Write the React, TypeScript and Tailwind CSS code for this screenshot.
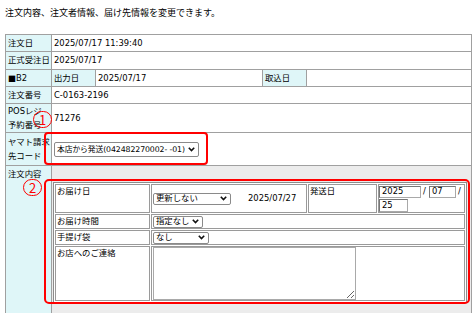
import React from "react";

function Chevron() {
  return (
    <svg width="7" height="5" viewBox="0 0 7 5" className="shrink-0">
      <path d="M0.8 0.8 L3.5 3.6 L6.2 0.8" fill="none" stroke="#111" strokeWidth="1.6" />
    </svg>
  );
}

function Sel({ label, className }: { label: string; className: string }) {
  return (
    <div
      className={
        "flex items-center justify-between overflow-hidden rounded-[2px] border border-[#8a8a8a] bg-white pl-[2px] pr-[3px] " +
        className
      }
    >
      <span className="whitespace-nowrap">{label}</span>
      <Chevron />
    </div>
  );
}

function Inp({ value, className }: { value: string; className: string }) {
  return (
    <div
      className={
        "flex items-center border border-[#a9a9a9] border-t-[#777] border-l-[#777] bg-white pl-[2px] " +
        className
      }
    >
      {value}
    </div>
  );
}

export default function App() {
  const lab = "whitespace-nowrap border border-[#a0a0a0] bg-[#dff6f8] pl-[2px] pr-0 align-middle";
  const val = "whitespace-nowrap border border-[#a0a0a0] bg-white px-[2px] align-middle";
  const icell = "whitespace-nowrap border border-[#9a9a9a] p-0";
  return (
    <div className="relative min-h-[313px] w-[472px] overflow-hidden bg-white text-black font-['DejaVu_Sans','Noto_Sans_CJK_JP',sans-serif]">
      <p className="pl-[5px] pt-[7px] text-[9px] leading-[12px] font-['Noto_Sans_CJK_JP',sans-serif]">
        注文内容、注文者情報、届け先情報を変更できます。
      </p>
      <table className="ml-[5px] mt-[15px] w-[466px] table-fixed border-collapse border border-[#a0a0a0] text-[8.4px] leading-[13px]">
        <colgroup>
          <col className="w-[46px]" />
          <col className="w-[44px]" />
          <col className="w-[167px]" />
          <col className="w-[44px]" />
          <col className="w-[165px]" />
        </colgroup>
        <tbody>
          <tr>
            <td className={lab + " h-[17px]"}>注文日</td>
            <td className={val} colSpan={4}>2025/07/17 11:39:40</td>
          </tr>
          <tr>
            <td className={lab + " h-[18px]"}>正式受注日</td>
            <td className={val} colSpan={4}>2025/07/17</td>
          </tr>
          <tr>
            <td className={lab + " h-[17px]"}>■B2</td>
            <td className={lab}>出力日</td>
            <td className={val}>2025/07/17</td>
            <td className={lab}>取込日</td>
            <td className={val}></td>
          </tr>
          <tr>
            <td className={lab + " h-[17px]"}>注文番号</td>
            <td className={val} colSpan={4}>C-0163-2196</td>
          </tr>
          <tr>
            <td className={lab + " h-[29px] leading-[14px]"}>
              POSレジ
              <br />
              予約番号
            </td>
            <td className={val} colSpan={4}>71276</td>
          </tr>
          <tr>
            <td className={lab + " h-[33px] leading-[14px]"}>
              ヤマト請求
              <br />
              先コード
            </td>
            <td className={val} colSpan={4}>
              <Sel label="本店から発送(042482270002- -01)" className="h-[15px] w-[145px] text-[7.8px] tracking-[-0.1px]" />
            </td>
          </tr>
          <tr>
            <td className="whitespace-nowrap border border-[#a0a0a0] bg-[#dff6f8] pl-[2px] pt-[2px] align-top">注文内容</td>
            <td className="border border-[#a0a0a0] bg-[#ececec] pb-[20px] pl-[1px] pt-[16px] align-top" colSpan={4}>
              <table className="w-[414px] table-fixed border-separate border-spacing-[1px] border border-[#8c8c8c] bg-white">
                <colgroup>
                  <col className="w-[95px]" />
                  <col className="w-[156px]" />
                  <col className="w-[69px]" />
                  <col className="w-[87px]" />
                </colgroup>
                <tbody>
                  <tr>
                    <td className={icell + " h-[28px] px-[1px] align-top"}>お届け日</td>
                    <td className={icell + " px-[1px] align-middle"}>
                      <div className="flex items-center">
                        <Sel label="更新しない" className="h-[12px] w-[78px]" />
                        <span className="ml-[17px]">2025/07/27</span>
                      </div>
                    </td>
                    <td className={icell + " px-[1px] align-top"}>発送日</td>
                    <td className={icell + " align-top"}>
                      <div className="flex items-center">
                        <Inp value="2025" className="h-[12px] w-[42px]" />
                        <span className="ml-[2px] w-[5px]">/</span>
                        <Inp value="07" className="ml-[1px] h-[12px] w-[27px]" />
                        <span className="ml-[2px]">/</span>
                      </div>
                      <Inp value="25" className="mt-[1px] h-[13px] w-[29px]" />
                    </td>
                  </tr>
                  <tr>
                    <td className={icell + " h-[15px] px-[1px] align-top"}>お届け時間</td>
                    <td className={icell + " px-[1px] align-middle"} colSpan={3}>
                      <Sel label="指定なし" className="h-[12px] w-[50px]" />
                    </td>
                  </tr>
                  <tr>
                    <td className={icell + " h-[15px] px-[1px] align-top"}>手提げ袋</td>
                    <td className={icell + " px-[1px] align-middle"} colSpan={3}>
                      <Sel label="なし" className="h-[12px] w-[56px]" />
                    </td>
                  </tr>
                  <tr>
                    <td className={icell + " h-[55px] px-[1px] align-top"}>お店へのご連絡</td>
                    <td className={icell + " px-[1px] align-top"} colSpan={3}>
                      <textarea
                        className="block h-[53px] w-[203px] border border-[#a9a9a9] bg-white"
                        defaultValue=""
                      />
                    </td>
                  </tr>
                </tbody>
              </table>
            </td>
          </tr>
        </tbody>
      </table>

      <div className="absolute left-[44px] top-[132px] h-[33px] w-[164px] rounded-[4px] border-2 border-[#f00]" />
      <div className="absolute left-[44px] top-[179px] h-[125px] w-[426px] rounded-[5px] border-2 border-[#f00]" />
      <div className="absolute left-[33px] top-[111px] flex h-[17px] w-[19px] items-center justify-center rounded-full border border-[#f00] text-[13px] leading-none text-[#f00] font-['Noto_Sans_CJK_JP',sans-serif]">
        1
      </div>
      <div className="absolute left-[23px] top-[179px] flex h-[17px] w-[19px] items-center justify-center rounded-full border border-[#f00] text-[13px] leading-none text-[#f00] font-['Noto_Sans_CJK_JP',sans-serif]">
        2
      </div>
    </div>
  );
}
